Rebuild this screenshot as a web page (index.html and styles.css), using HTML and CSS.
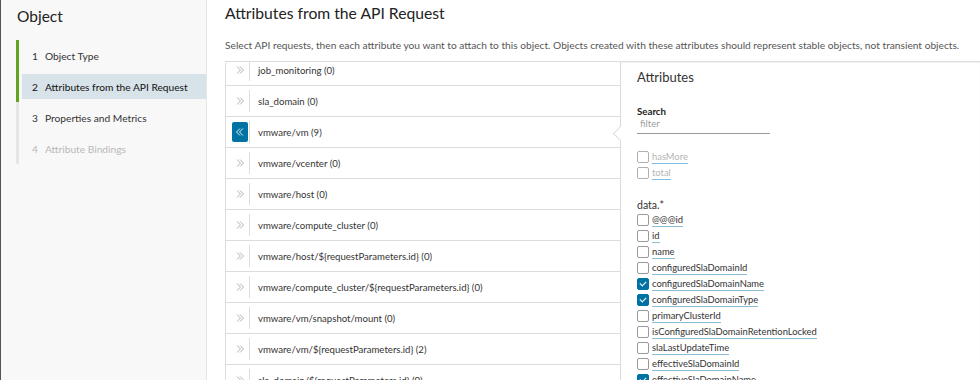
FILE: index.html
```html
<!DOCTYPE html>
<html lang="en">
<head>
    <meta charset="UTF-8">
    <title>Object - Attributes from the API Request</title>
    <link rel="stylesheet" href="styles.css">
</head>
<body>
    <div class="app">
        <aside class="sidebar">
            <h2 class="sidebar-title">Object</h2>
            <ol class="steps">
                <li class="step done"><span class="step-inner"><span class="num">1</span>Object Type</span></li>
                <li class="step done current"><span class="step-inner"><span class="num">2</span>Attributes from the API Request</span></li>
                <li class="step"><span class="step-inner"><span class="num">3</span>Properties and Metrics</span></li>
                <li class="step disabled"><span class="step-inner"><span class="num">4</span>Attribute Bindings</span></li>
            </ol>
        </aside>

        <main class="main">
            <h1 class="page-title">Attributes from the API Request</h1>
            <p class="desc">Select API requests, then each attribute you want to attach to this object. Objects created with these attributes should represent stable objects, not transient objects.</p>

            <div class="split">
                <div class="requests">
                    <div class="req-scroll" id="requests"></div>
                </div>

                <div class="attrs">
                    <h3 class="attrs-title">Attributes</h3>
                    <label class="search-label" for="filter">Search</label>
                    <input class="search-input" id="filter" type="text" placeholder="filter">

                    <ul class="check-list" id="topAttrs"></ul>

                    <div class="group-title">data.*</div>
                    <ul class="check-list" id="dataAttrs"></ul>
                </div>
            </div>
        </main>
    </div>

    <script>
        const requests = [
            ['job_monitoring', 0],
            ['sla_domain', 0],
            ['vmware/vm', 9, true],
            ['vmware/vcenter', 0],
            ['vmware/host', 0],
            ['vmware/compute_cluster', 0],
            ['vmware/host/${requestParameters.id}', 0],
            ['vmware/compute_cluster/${requestParameters.id}', 0],
            ['vmware/vm/snapshot/mount', 0],
            ['vmware/vm/${requestParameters.id}', 2],
            ['sla_domain/${requestParameters.id}', 0]
        ];

        const topAttrs = [
            ['hasMore', false],
            ['total', false]
        ];

        const dataAttrs = [
            ['@@@id', false],
            ['id', false],
            ['name', false],
            ['configuredSlaDomainId', false],
            ['configuredSlaDomainName', true],
            ['configuredSlaDomainType', true],
            ['primaryClusterId', false],
            ['isConfiguredSlaDomainRetentionLocked', false],
            ['slaLastUpdateTime', false],
            ['effectiveSlaDomainId', false],
            ['effectiveSlaDomainName', true]
        ];

        const chevronRight = '<svg viewBox="0 0 10 10" width="10" height="10"><path d="M2 1.5 L5.5 5 L2 8.5 M5 1.5 L8.5 5 L5 8.5" fill="none" stroke="currentColor" stroke-width="0.9"/></svg>';
        const chevronLeft = '<svg viewBox="0 0 10 10" width="10" height="10"><path d="M8 1.5 L4.5 5 L8 8.5 M5 1.5 L1.5 5 L5 8.5" fill="none" stroke="currentColor" stroke-width="0.9"/></svg>';

        const reqList = document.getElementById('requests');
        requests.forEach(([name, count, active]) => {
            const row = document.createElement('div');
            row.className = 'req-row' + (active ? ' active' : '');
            row.innerHTML =
                `<span class="req-toggle"><span class="toggle-btn">${active ? chevronLeft : chevronRight}</span></span>` +
                `<span class="req-name"></span>`;
            row.querySelector('.req-name').textContent = `${name} (${count})`;
            reqList.appendChild(row);
        });

        function fillChecks(listId, items, disabled) {
            const list = document.getElementById(listId);
            items.forEach(([name, checked]) => {
                const li = document.createElement('li');
                li.className = 'check-item' + (disabled ? ' disabled' : '');
                li.innerHTML = `<span class="box${checked ? ' checked' : ''}"></span><span class="check-label"></span>`;
                li.querySelector('.check-label').textContent = name;
                list.appendChild(li);
            });
        }

        fillChecks('topAttrs', topAttrs, true);
        fillChecks('dataAttrs', dataAttrs, false);
    </script>
</body>
</html>
```

FILE: styles.css
```css
:root {
    --text: #313131;
    --muted: #565656;
    --line: #dcdcdc;
    --blue: #0072a3;
    --green: #62a420;
    --highlight: #d8e3e9;
}

html, body {
    margin: 0;
    height: 100%;
    overflow: hidden;
}

body {
    font-family: 'Lato', 'Noto Sans', sans-serif;
    color: var(--text);
    background: #fff;
}

.app {
    display: flex;
    height: 380px;
    overflow: hidden;
    border-left: 1px solid #555;
}

/* sidebar */

.sidebar {
    width: 206px;
    flex: none;
    box-sizing: border-box;
    background: #f8f8f8;
    border-right: 1px solid #e6e6e6;
    padding-left: 15px;
}

.sidebar-title {
    margin: 0;
    padding: 4px 0 0 1px;
    font-size: 15.5px;
    line-height: 24px;
    font-weight: 400;
    color: #222;
    height: 36px;
}

.steps {
    list-style: none;
    margin: 0;
    padding: 0;
}

.step {
    height: 31px;
    border-left: 3px solid #e6e6e6;
    padding: 3px 0 3px 3px;
    box-sizing: border-box;
    font-size: 10.2px;
    color: #333;
}

.step.done {
    border-left-color: var(--green);
}

.step-inner {
    display: flex;
    align-items: center;
    height: 100%;
    padding-left: 10px;
}

.step.current .step-inner {
    background: var(--highlight);
    color: #111;
}

.step.disabled {
    color: #b8b8b8;
}

.num {
    width: 13px;
}

/* main */

.main {
    flex: 1;
    padding: 0 0 0 18px;
    min-width: 0;
}

.page-title {
    margin: 0;
    padding-top: 3px;
    font-size: 15.7px;
    line-height: 20px;
    font-weight: 400;
    color: #222;
}

.desc {
    margin: 14px 0 0;
    font-size: 10.2px;
    line-height: 16px;
    color: var(--muted);
    white-space: nowrap;
}

.split {
    display: flex;
    margin-top: 8px;
    border-top: 1px solid var(--line);
    height: 320px;
    overflow: hidden;
}

.requests {
    width: 394px;
    flex: none;
    border-left: 1px solid var(--line);
    border-top-left-radius: 3px;
    overflow: hidden;
}

.req-scroll {
    margin-top: -7px;
}

.req-row {
    display: flex;
    align-items: center;
    height: 30px;
    border-bottom: 1px solid var(--line);
}

.req-toggle {
    width: 24px;
    height: 22px;
    flex: none;
    display: flex;
    align-items: center;
    padding-left: 6px;
    box-sizing: border-box;
    border-right: 1px solid var(--line);
}

.toggle-btn {
    width: 16px;
    height: 20px;
    display: flex;
    align-items: center;
    justify-content: center;
    color: #a8a8a8;
    border-radius: 2px;
}

.req-row.active .toggle-btn {
    background: var(--blue);
    color: #fff;
}

.req-name {
    padding-left: 8px;
    font-size: 9.6px;
    color: #333;
    white-space: nowrap;
}

/* attributes panel */

.attrs {
    flex: 1;
    position: relative;
    border-left: 1px solid var(--line);
    padding: 6px 0 0 16px;
    box-shadow: inset 0 1px 1px rgba(0, 0, 0, 0.06);
}

.attrs::before {
    content: '';
    position: absolute;
    left: -6px;
    top: 66px;
    width: 10px;
    height: 10px;
    background: #fff;
    border-left: 1px solid var(--line);
    border-bottom: 1px solid var(--line);
    transform: rotate(45deg);
}

.attrs-title {
    margin: 0;
    font-size: 13px;
    line-height: 18px;
    font-weight: 400;
    color: #333;
}

.search-label {
    display: block;
    margin-top: 19px;
    font-size: 9.7px;
    font-weight: 700;
    line-height: 12px;
    color: #222;
}

.search-input {
    display: block;
    width: 133px;
    box-sizing: border-box;
    margin-top: 0;
    padding: 0 3px 2px;
    border: none;
    border-bottom: 1px solid #9a9a9a;
    font-family: inherit;
    font-size: 9.6px;
    line-height: 14px;
    outline: none;
}

.search-input::placeholder {
    color: #a0a0a0;
}

.check-list {
    list-style: none;
    margin: 0;
    padding: 0;
}

#topAttrs {
    margin-top: 15px;
}

.check-item {
    display: flex;
    align-items: center;
    height: 16px;
    font-size: 9.4px;
}

.box {
    width: 10px;
    height: 10px;
    border: 1px solid #9a9a9a;
    border-radius: 2px;
    margin-right: 3px;
    flex: none;
    position: relative;
}

.box.checked {
    background: var(--blue);
    border-color: var(--blue);
}

.box.checked::after {
    content: '';
    position: absolute;
    left: 3px;
    top: 1px;
    width: 3px;
    height: 5px;
    border: solid #fff;
    border-width: 0 1.5px 1.5px 0;
    transform: rotate(45deg);
}

.check-label {
    color: #333;
    border-bottom: 1px solid #8dbdd6;
    line-height: 12px;
}

.check-item.disabled .box {
    border-color: #b0b0b0;
}

.check-item.disabled .check-label {
    color: #b4b4b4;
    border-bottom-color: #7cc0e0;
}

.group-title {
    margin-top: 17px;
    font-size: 10.5px;
    line-height: 14px;
    color: #333;
}
```
